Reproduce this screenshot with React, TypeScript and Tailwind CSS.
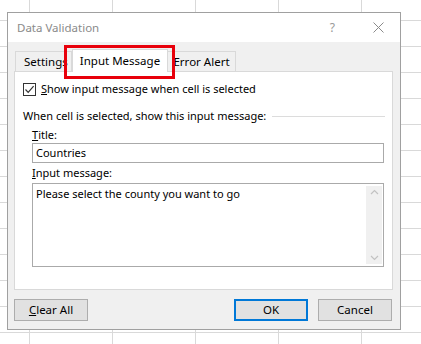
import { Fragment } from 'react'

const font = { fontFamily: '"Noto Sans", "Open Sans", sans-serif' }

function Grid() {
  const rows = Array.from({ length: 14 })
  const cols = Array.from({ length: 6 })
  return (
    <div className="grid grid-cols-[30px_repeat(5,83px)] grid-rows-[21px_repeat(13,26px)]">
      {rows.map((_, r) => (
        <Fragment key={r}>
          {cols.map((_, c) => (
            <div key={c} className="border-r border-b border-[#d9d9d9]" />
          ))}
        </Fragment>
      ))}
    </div>
  )
}

function Btn({ children, primary }: { children: React.ReactNode; primary?: boolean }) {
  return (
    <button
      className={
        primary
          ? 'w-[74px] h-[22px] bg-[#e1e1e1] border-2 border-[#0078d7] text-[11.5px] text-black flex items-center justify-center'
          : 'w-[74px] h-[22px] bg-[#e1e1e1] border border-[#adadad] text-[11.5px] text-black flex items-center justify-center'
      }
    >
      {children}
    </button>
  )
}

export default function App() {
  return (
    <div className="relative w-[421px] h-[344px] bg-white overflow-hidden" style={font}>
      <Grid />

      <div className="absolute left-[7px] top-[12px] w-[394px] h-[318px] border border-[#a0a0a0] bg-[#f0f0f0] flex flex-col">
        {/* title bar */}
        <div className="h-[29px] bg-white flex items-center pl-[9px] pr-[16px] text-[11.5px] text-[#8a8a8a]">
          <span className="flex-1">Data Validation</span>
          <span className="mr-[38px] text-[12px] text-[#999]">?</span>
          <svg width="11" height="11" viewBox="0 0 11 11" className="text-[#8a8a8a]">
            <path d="M0.5 0.5 L10.5 10.5 M10.5 0.5 L0.5 10.5" stroke="currentColor" strokeWidth="1" fill="none" />
          </svg>
        </div>

        {/* tabs */}
        <div className="relative flex items-end pl-[7px] pt-[7px] h-[29px] text-[11.5px] text-black">
          <div className="h-[20px] w-[57px] border border-b-0 border-[#d9d9d9] bg-[#f0f0f0] flex items-center pl-[8px]">
            Settings
          </div>
          <div className="h-[23px] w-[96px] -mb-[1px] border border-b-0 border-[#d9d9d9] bg-white flex items-center justify-center relative z-10">
            Input Message
          </div>
          <div className="h-[20px] w-[68px] border border-b-0 border-l-0 border-[#d9d9d9] bg-[#f0f0f0] flex items-center justify-center">
            Error Alert
          </div>
          <div className="absolute left-[56px] top-[3px] w-[111px] h-[34px] border-[3px] border-[#e8000b] z-20" />
        </div>

        {/* panel */}
        <div className="mx-[6px] mr-[7px] h-[219px] bg-white border border-[#d9d9d9] px-[8px] pt-[10px] text-[11px] text-black">
          <div className="flex items-center gap-[5px] h-[14px]">
            <div className="w-[13px] h-[13px] border border-[#333] flex items-center justify-center">
              <svg width="11" height="11" viewBox="0 0 11 11">
                <path d="M1.5 5.5 L4.2 8.3 L9.6 2.2" stroke="#333" strokeWidth="1.2" fill="none" />
              </svg>
            </div>
            <span>
              <u>S</u>how input message when cell is selected
            </span>
          </div>

          <div className="flex items-center mt-[12px] h-[16px]">
            <span>When cell is selected, show this input message:</span>
            <div className="flex-1 h-px bg-[#dcdcdc] ml-[6px] mr-[-1px]" />
          </div>

          <div className="pl-[9px]">
            <div className="mt-[3px] h-[16px] flex items-center">
              <span>
                <u>T</u>itle:
              </span>
            </div>
            <div className="mt-[0px] h-[20px] border border-[#aaaaaa] flex items-center pl-[3px]">Countries</div>
            <div className="mt-[2px] h-[16px] flex items-center">
              <span>
                <u>I</u>nput message:
              </span>
            </div>
            <div className="mt-[2px] h-[84px] border border-[#aaaaaa] flex pl-[3px] pt-[2px] pr-[1px] pb-[2px]">
              <span className="flex-1 leading-[16px]">Please select the county you want to go</span>
              <div className="w-[16px] bg-[#f0f0f0] flex flex-col items-center justify-between py-[3px]">
                <svg width="9" height="6" viewBox="0 0 9 6">
                  <path d="M1 5 L4.5 1.5 L8 5" stroke="#c2c2c2" strokeWidth="1.2" fill="none" />
                </svg>
                <svg width="9" height="6" viewBox="0 0 9 6">
                  <path d="M1 1 L4.5 4.5 L8 1" stroke="#c2c2c2" strokeWidth="1.2" fill="none" />
                </svg>
              </div>
            </div>
          </div>
        </div>

        {/* buttons */}
        <div className="flex items-center mt-[9px] pl-[6px] pr-[8px]">
          <Btn>
            <span>
              <u>C</u>lear All
            </span>
          </Btn>
          <div className="flex-1" />
          <Btn primary>OK</Btn>
          <div className="w-[10px]" />
          <Btn>Cancel</Btn>
        </div>
      </div>
    </div>
  )
}
